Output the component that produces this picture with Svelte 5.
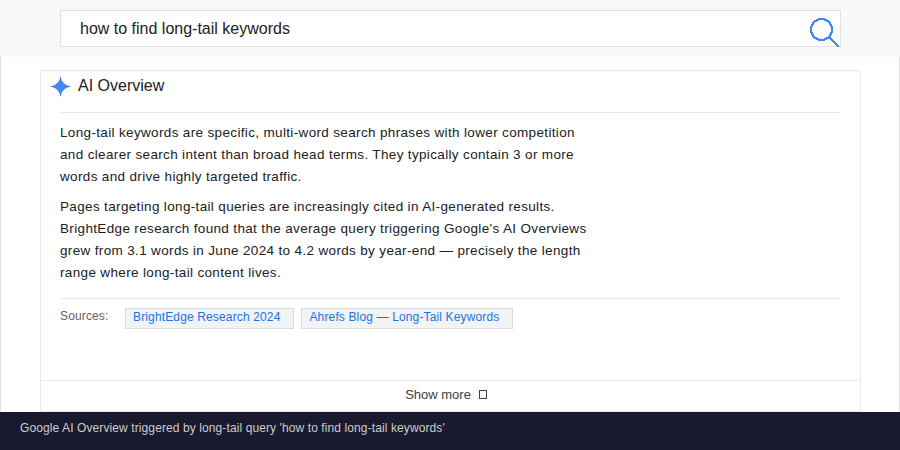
<script>
  const sources = ["BrightEdge Research 2024", "Ahrefs Blog — Long-Tail Keywords"];
</script>

<div class="page">
  <header class="top">
    <div class="search">
      <span class="query">how to find long-tail keywords</span>
      <svg class="lens" width="32" height="32" viewBox="0 0 32 32" fill="none" stroke="#4285f4" shape-rendering="crispEdges">
        <circle cx="13.5" cy="14.5" r="10.5" stroke-width="2" />
        <path d="M22 23 L31 32" stroke-width="2" />
      </svg>
    </div>
  </header>

  <main class="body">
    <section class="card">
      <div class="card-head">
        <svg class="spark" width="21" height="21" viewBox="0 0 22 22">
          <path fill="#4285f4" d="M11 0 L12.2 4.5 L14.5 7.5 L17.5 9.8 L22 11 L17.5 12.2 L14.5 14.5 L12.2 17.5 L11 22 L9.8 17.5 L7.5 14.5 L4.5 12.2 L0 11 L4.5 9.8 L7.5 7.5 L9.8 4.5 Z" />
        </svg>
        <h2>AI Overview</h2>
      </div>

      <div class="text">
        <p>Long-tail keywords are specific, multi-word search phrases with lower competition<br />and clearer search intent than broad head terms. They typically contain 3 or more<br />words and drive highly targeted traffic.</p>
        <p>Pages targeting long-tail queries are increasingly cited in AI-generated results.<br />BrightEdge research found that the average query triggering Google's AI Overviews<br />grew from 3.1 words in June 2024 to 4.2 words by year-end — precisely the length<br />range where long-tail content lives.</p>
      </div>

      <div class="sources">
        <span class="label">Sources:</span>
        {#each sources as s}
          <span class="chip">{s}</span>
        {/each}
      </div>

      <div class="more">Show more <i class="tofu"></i></div>
    </section>
  </main>

  <footer class="caption">Google AI Overview triggered by long-tail query 'how to find long-tail keywords'</footer>
</div>

<style>
  :global(body) {
    margin: 0;
  }
  .page {
    width: 900px;
    height: 450px;
    display: flex;
    flex-direction: column;
    font-family: "Liberation Sans", Arial, sans-serif;
    overflow: hidden;
    background: #fff;
  }
  .top {
    box-sizing: border-box;
    height: 57px;
    flex-shrink: 0;
    padding: 10px 59px 0 60px;
    background: #f8f9fa;
  }
  .search {
    box-sizing: border-box;
    height: 37px;
    display: flex;
    align-items: center;
    justify-content: space-between;
    padding: 0 0 0 19px;
    background: #fff;
    border: 1px solid #dfe1e5;
    color: #202124;
    font-size: 16px;
  }
  .lens {
    margin: 5px 0 0;
    overflow: visible;
  }
  .body {
    flex: 1;
    min-height: 0;
    padding: 13px 38px 0 39px;
    border-left: 1px solid #e0e0e0;
    border-right: 1px solid #e0e0e0;
  }
  .card {
    height: 342px;
    box-sizing: border-box;
    border: 1px solid #e8eaed;
    display: flex;
    flex-direction: column;
  }
  .card-head {
    box-sizing: border-box;
    height: 42px;
    margin: 0 19px;
    padding-top: 5px;
    display: flex;
    align-items: flex-start;
    gap: 7px;
    border-bottom: 1px solid #e8eaed;
  }
  .spark {
    margin-left: -10px;
    flex-shrink: 0;
  }
  h2 {
    margin: 0;
    font-size: 16px;
    line-height: 20px;
    font-weight: 400;
    color: #202124;
  }
  .text {
    padding: 9px 19px 0;
    font-size: 13.5px;
    letter-spacing: 0.345px;
    line-height: 22px;
    color: #202124;
  }
  p {
    margin: 0 0 8px;
  }
  .sources {
    margin: 6px 19px 0;
    padding-top: 9px;
    border-top: 1px solid #e8eaed;
    display: flex;
    align-items: flex-start;
    gap: 7px;
    font-size: 12px;
    letter-spacing: 0.14px;
  }
  .label {
    color: #5f6368;
    width: 58px;
    line-height: 16px;
  }
  .chip {
    box-sizing: border-box;
    height: 21px;
    padding: 0 13px 0 7px;
    background: #f1f3f4;
    border: 1px solid #dadce0;
    color: #1a73e8;
    line-height: 16px;
  }
  .more {
    box-sizing: border-box;
    margin-top: auto;
    height: 31px;
    padding-bottom: 3px;
    border-top: 1px solid #e8eaed;
    display: flex;
    align-items: center;
    justify-content: center;
    gap: 8px;
    font-size: 13px;
    color: #3c4043;
  }
  .tofu {
    box-sizing: border-box;
    width: 8px;
    height: 9px;
    margin-right: 9px;
    border: 1px solid #3c4043;
  }
  .caption {
    box-sizing: border-box;
    height: 38px;
    flex-shrink: 0;
    padding: 0 20px;
    background: #1a1a2e;
    color: #ccc;
    font-size: 12px;
    letter-spacing: 0.1px;
    line-height: 32px;
  }
</style>
